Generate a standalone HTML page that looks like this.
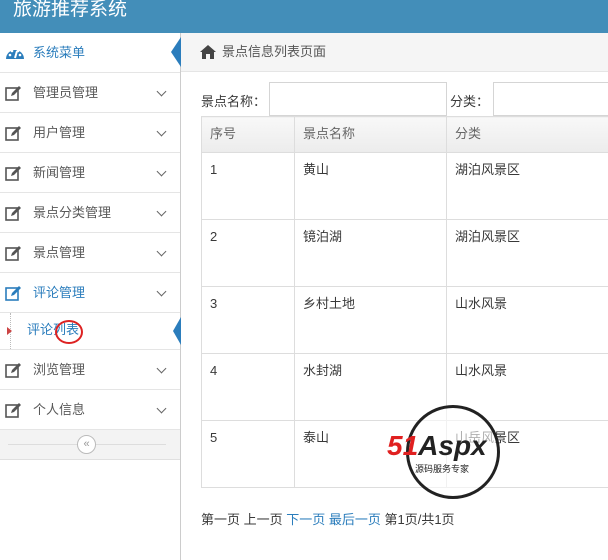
<!DOCTYPE html>
<html><head><meta charset="utf-8"><style>
*{margin:0;padding:0;box-sizing:border-box}
body{width:608px;height:560px;overflow:hidden;background:#fff;font-family:"Liberation Sans","Noto Sans CJK SC",sans-serif;font-size:13px;color:#393939;position:relative}
.hd{position:absolute;left:0;top:0;width:608px;height:33px;background:#438eb9;color:#fff;font-size:19px;line-height:20px;padding-left:13px}
.sb{position:absolute;left:0;top:33px;width:181px;height:527px;border-right:1px solid #ccc;background:#fff}
.it{height:40px;border-bottom:1px solid #e5e5e5;position:relative;line-height:39px;padding-left:33px;color:#585858;font-size:13px}
.it svg{position:absolute;left:5px;top:12px}
.chev{position:absolute;left:158px;top:15px;width:7px;height:7px;border-right:1.5px solid #666;border-bottom:1.5px solid #666;transform:rotate(45deg)}
.main{position:absolute;left:181px;top:33px;right:0;bottom:0}
.bc{height:39px;background:#f5f5f5;border-bottom:1px solid #e5e5e5;line-height:38px;padding-left:41px;color:#555}
table{position:absolute;left:20px;top:83px;border-collapse:collapse;width:420px}
td,th{border:1px solid #ddd;text-align:left;vertical-align:top;font-weight:normal;padding-left:8px;line-height:20px}
th{height:36px;background:linear-gradient(#f8f8f8,#ececec);line-height:34px;color:#666}
td{height:67px;padding-top:7px}
td span{display:inline-block;line-height:20px;vertical-align:top}
input{position:absolute;height:34px;border:1px solid #d5d5d5;background:#fff}
</style></head><body>
<div class="hd">旅游推荐系统</div>
<div class="sb">
 <div class="it" style="color:#2b7dbc;background:#fff">
  <svg width="20" height="16" viewBox="0 0 20 16"><path d="M1 14a9 9 0 0 1 18 0z" fill="#2b7dbc"/><circle cx="5" cy="10" r="1.3" fill="#fff"/><circle cx="7" cy="6" r="1.3" fill="#fff"/><circle cx="13" cy="6" r="1.3" fill="#fff"/><circle cx="15" cy="10" r="1.3" fill="#fff"/><path d="M10 13l2-7" stroke="#fff" stroke-width="2"/></svg>系统菜单
  <div style="position:absolute;right:-1px;top:4px;width:0;height:0;border-top:15px solid transparent;border-bottom:15px solid transparent;border-right:10px solid #2b7dbc"></div>
 </div>
 <div class="it"><svg width="18" height="16"><rect x="1" y="3" width="12" height="12" fill="none" stroke="#555" stroke-width="1.6"/><path d="M6 11l1-3 7-7 2 2-7 7z" fill="#555"/></svg>管理员管理<div class="chev"></div></div>
 <div class="it"><svg width="18" height="16"><rect x="1" y="3" width="12" height="12" fill="none" stroke="#555" stroke-width="1.6"/><path d="M6 11l1-3 7-7 2 2-7 7z" fill="#555"/></svg>用户管理<div class="chev"></div></div>
 <div class="it"><svg width="18" height="16"><rect x="1" y="3" width="12" height="12" fill="none" stroke="#555" stroke-width="1.6"/><path d="M6 11l1-3 7-7 2 2-7 7z" fill="#555"/></svg>新闻管理<div class="chev"></div></div>
 <div class="it"><svg width="18" height="16"><rect x="1" y="3" width="12" height="12" fill="none" stroke="#555" stroke-width="1.6"/><path d="M6 11l1-3 7-7 2 2-7 7z" fill="#555"/></svg>景点分类管理<div class="chev"></div></div>
 <div class="it"><svg width="18" height="16"><rect x="1" y="3" width="12" height="12" fill="none" stroke="#555" stroke-width="1.6"/><path d="M6 11l1-3 7-7 2 2-7 7z" fill="#555"/></svg>景点管理<div class="chev"></div></div>
 <div class="it" style="color:#2b7dbc"><svg width="18" height="16"><rect x="1" y="3" width="12" height="12" fill="none" stroke="#2b7dbc" stroke-width="1.6"/><path d="M6 11l1-3 7-7 2 2-7 7z" fill="#2b7dbc"/></svg>评论管理<div class="chev"></div></div>
 <div class="it" style="height:37px;line-height:34px;padding-left:27px;color:#2b7dbc;background:#fff">
  <div style="position:absolute;left:10px;top:0;bottom:0;border-left:1px dotted #bbb"></div>
  <div style="position:absolute;left:7px;top:14px;border-top:4px solid transparent;border-bottom:4px solid transparent;border-left:5px solid #c44"></div>评论列表
  <div style="position:absolute;left:55px;top:7px;width:28px;height:24px;border:2px solid #d22;border-radius:50%"></div>
  <div style="position:absolute;right:-1px;top:4px;border-top:14px solid transparent;border-bottom:14px solid transparent;border-right:8px solid #2b7dbc"></div>
 </div>
 <div class="it"><svg width="18" height="16"><rect x="1" y="3" width="12" height="12" fill="none" stroke="#555" stroke-width="1.6"/><path d="M6 11l1-3 7-7 2 2-7 7z" fill="#555"/></svg>浏览管理<div class="chev"></div></div>
 <div class="it"><svg width="18" height="16"><rect x="1" y="3" width="12" height="12" fill="none" stroke="#555" stroke-width="1.6"/><path d="M6 11l1-3 7-7 2 2-7 7z" fill="#555"/></svg>个人信息<div class="chev"></div></div>
 <div style="height:30px;background:#f3f3f3;border-bottom:1px solid #e0e0e0;position:relative">
  <div style="position:absolute;left:8px;right:14px;top:14px;border-top:1px solid #ddd"></div>
  <div style="position:absolute;left:77px;top:5px;width:19px;height:19px;border:1px solid #bbb;border-radius:50%;background:#fff;font-size:11px;line-height:17px;text-align:center;color:#999">«</div>
 </div>
</div>
<div class="main">
 <div class="bc"><svg style="position:absolute;left:19px;top:12px" width="16" height="14" viewBox="0 0 16 14"><path d="M8 0L0 7h2v7h4V9h4v5h4V7h2z" fill="#444"/></svg>景点信息列表页面</div>
 <div style="position:absolute;left:20px;top:58px">景点名称：</div>
 <input style="left:88px;top:49px;width:178px">
 <div style="position:absolute;left:269px;top:58px">分类：</div>
 <input style="left:312px;top:49px;width:120px">
 <table>
  <tr><th style="width:93px">序号</th><th style="width:152px">景点名称</th><th>分类</th></tr>
  <tr><td><span>1</span></td><td><span>黄山</span></td><td><span>湖泊风景区</span></td></tr>
  <tr><td><span>2</span></td><td><span>镜泊湖</span></td><td><span>湖泊风景区</span></td></tr>
  <tr><td><span>3</span></td><td><span>乡村土地</span></td><td><span>山水风景</span></td></tr>
  <tr><td><span>4</span></td><td><span>水封湖</span></td><td><span>山水风景</span></td></tr>
  <tr><td><span>5</span></td><td><span>泰山</span></td><td><span>山岳风景区</span></td></tr>
 </table>
 <div style="position:absolute;left:20px;top:476px">第一页 上一页 <span style="color:#2b7dbc">下一页 最后一页</span> 第1页/共1页</div>
 <div style="position:absolute;left:225px;top:372px;width:94px;height:94px;border:3px solid #222;border-radius:50%;background:rgba(255,255,255,.6)"></div>
 <div style="position:absolute;left:206px;top:397px;font-size:28px;font-weight:bold;font-style:italic;line-height:32px"><span style="color:#e02020">51</span><span style="color:#222">Aspx</span></div>
 <div style="position:absolute;left:234px;top:429px;font-size:9px;color:#222">源码服务专家</div>
</div>
</body></html>
